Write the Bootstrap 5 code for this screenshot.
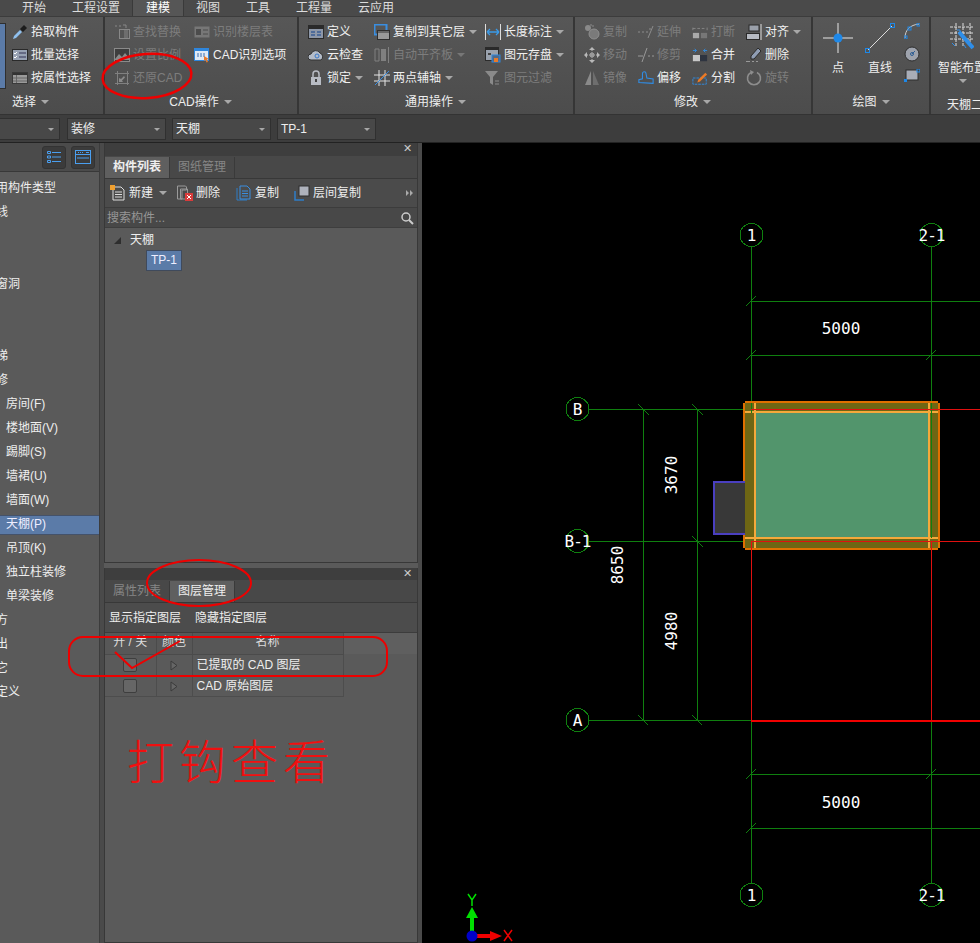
<!DOCTYPE html>
<html lang="zh-CN">
<head>
    <meta charset="UTF-8" />
    <meta name="viewport" content="width=device-width, initial-scale=1.0" />
    <title>建模</title>
    <link href="https://cdn.jsdelivr.net/npm/bootstrap@5.3.3/dist/css/bootstrap.min.css" rel="stylesheet" />
    <style>
        body {
            font-family: "Liberation Sans", "Noto Sans CJK SC", sans-serif;
            font-size: 12px;
            line-height: 16px;
            background-color: #3c3c3c;
            color: #eee;
            width: 980px;
            height: 943px;
            overflow: hidden;
        }

        .app-shell { position: relative; width: 980px; height: 943px; overflow: hidden; }

        /* tabs above the ribbon */
        .top-tabs { height: 16px; background-color: #4a4a4a; padding-left: 9px; }
        .top-tabs .nav-link {
            padding: 0 13px;
            height: 16px;
            line-height: 16px;
            color: #ddd;
            font-size: 12px;
        }
        .top-tabs .nav-link.active { background-color: #565656; color: #fff; box-shadow: 1px 0 #3a3a3a, -1px 0 #3a3a3a; }

        /* ribbon */
        .ribbon {
            height: 99px;
            overflow: hidden;
            background: linear-gradient(#575757, #4c4c4c);
            border-top: 1px solid #3c3c3c;
            border-bottom: 1px solid #333;
        }
        .rb-group { flex: none; padding-top: 3px; height: 97px; border-right: 2px solid #363636; position: relative; }
        .rb-body { height: 72px; }
        .rb-label { height: 20px; line-height: 20px; text-align: center; color: #eee; padding-right: 10px; }
        .rb-col { flex: none; }
        .rb-item { height: 23px; white-space: nowrap; gap: 3px; color: #f0f0f0; }
        .rb-item.off { color: #7d7d7d; }
        .rb-item svg { flex: none; }
        .caret-down {
            display: inline-block;
            width: 0;
            height: 0;
            border-left: 4px solid transparent;
            border-right: 4px solid transparent;
            border-top: 4px solid #a8a8a8;
            margin-left: 5px;
            vertical-align: 2px;
        }
        .rb-item .caret-down { margin-left: 1px; }
        .rb-item.off .caret-down { border-top-color: #777; }
        .rb-large { width: 30px; flex: none; text-align: center; white-space: nowrap; }
        .rb-large svg { display: block; margin: 3px 0 7px; }
        .sel-block { width: 6px; height: 66px; margin-top: 3px; background-color: #5b7ba8; border: 1px solid #2f2f2f; border-left: 0; }
        .g-select { width: 105px; }
        .g-cad { width: 194px; padding-left: 9px; }
        .g-common { width: 276px; padding-left: 9px; }
        .g-edit { width: 238px; padding-left: 9px; }
        .g-draw { width: 118px; padding-left: 10px; }
        .g-smart { flex: none; width: 60px; border-right: 0; padding-left: 7px; overflow: hidden; }
        .first-col { margin-left: 6px; }
        .c-80 { width: 80px; }
        .c-66 { width: 66px; }
        .c-111 { width: 111px; }
        .c-54 { width: 54px; }
        .lbl-select { padding-right: 42px; }
        .me-large { margin-right: 12px; }
        .me-small { margin-right: 9px; }
        .mini-col { padding-top: 3px; }
        .draw-mini { margin-bottom: 7px; }
        .draw-mini.low { margin-top: 3px; }
        .smart-big svg { margin: 3px 0 7px 10px; }
        .smart-name { white-space: nowrap; }
        .smart-caret { display: block; margin: 3px 0 0 21px; }
        .smart-label { text-align: left; padding-left: 9px; white-space: nowrap; }

        /* combo row */
        .combo-bar { height: 28px; background-color: #3d3d3d; padding-top: 3px; gap: 6px; border-bottom: 1px solid #222; }
        .combo-box {
            height: 22px;
            background-color: #484848;
            border: 1px solid #303030;
            padding: 0 4px 0 3px;
            color: #eee;
            flex: none;
        }
        .combo-box .caret-down { border-left-width: 3px; border-right-width: 3px; border-top-width: 3px; margin-right: 1px; }
        .w-first { width: 61px; margin-left: -1px; margin-right: 1px; }
        .w-combo { width: 99px; }

        /* main area */
        .work-area { height: 800px; }
        .side-list { width: 100px; flex: none; background-color: #5a5a5a; border-right: 1px solid #3c3c3c; overflow: hidden; }
        .side-head { height: 29px; background-color: #4b4b4b; border-bottom: 1px solid #383838; gap: 5px; padding-right: 4px; }
        .head-btn {
            width: 24px;
            height: 23px;
            background-color: #3b3b3b;
            border: 1px solid #333;
            border-radius: 3px;
        }
        .tree-list {
            --bs-list-group-bg: transparent;
            --bs-list-group-color: #eee;
            --bs-list-group-border-width: 0;
            --bs-list-group-border-radius: 0;
            --bs-list-group-item-padding-x: 0;
            --bs-list-group-item-padding-y: 0;
            --bs-list-group-active-bg: #5b7ba8;
            --bs-list-group-active-color: #eef;
            margin-top: 5px;
            white-space: nowrap;
        }
        .tree-list .list-group-item { height: 24px; line-height: 23px; padding-left: 6px; font-size: 12px; }
        .tree-list .list-group-item.top-row { margin-left: -16px; padding-left: 0; background: none; }
        .tree-list .list-group-item.active { height: 20px; line-height: 17px; margin: 2px 0; border-top: 1px solid #44526a; border-bottom: 1px solid #44526a; }

        .split-bar { width: 4px; flex: none; background-color: #4a4a4a; }
        .mid-col { width: 314px; flex: none; }
        .dock-panel { border: 1px solid #383838; border-top: 0; background-color: #5a5a5a; }
        .dock-title { height: 12px; background-color: #3e3e3e; position: relative; }
        .top-panel .dock-title { height: 13px; }
        .dock-x { position: absolute; right: 5px; top: -2px; font-size: 11px; color: #ccc; line-height: 14px; }
        .dock-tabs { height: 23px; background-color: #484848; border-bottom: 1px solid #383838; padding-top: 1px; }
        .dock-tab { width: 65px; text-align: center; line-height: 21px; color: #868686; border-right: 1px solid #3a3a3a; }
        .dock-tab.on { background-color: #5f5f5f; color: #eee; font-weight: 700; }
        .dock-tab.on.plain { font-weight: 400; }
        .tool-row { height: 29px; background-color: #4b4b4b; border-bottom: 1px solid #3c3c3c; padding-left: 5px; padding-right: 4px; }
        .tool-item { gap: 3px; white-space: nowrap; }
        .tool-item .caret-down { margin-left: 3px; }
        .t-new { width: 67px; }
        .t-del { width: 59px; }
        .t-dup { width: 58px; }
        .search-row { height: 20px; background-color: #484848; border-bottom: 1px solid #3e3e3e; padding: 0 3px 0 2px; color: #969696; }
        .tree-node { padding: 2px 0 0 9px; height: 22px; gap: 9px; }
        .tree-chip { margin-left: 41px; width: 36px; height: 21px; line-height: 19px; text-align: center; background-color: #5b7ba8; border: 1px solid #3f4a5c; color: #eef; }
        .top-panel { height: 420px; }
        .panel-gap { height: 5px; background-color: #5a5a5a; }
        .bottom-panel { height: 375px; }
        .layer-tools { height: 30px; gap: 14px; background-color: #4c4c4c; border-bottom: 1px solid #3c3c3c; padding-left: 4px; }
        .layer-table { width: 100%; table-layout: fixed; border-collapse: collapse; color: #eee; }
        .layer-table th { height: 21px; font-weight: 400; text-align: center; background-color: #575757; border-right: 1px solid #4b4b4b; border-bottom: 1px solid #4b4b4b; color: #ddd; padding: 0 0 3px; }
        .layer-table td { height: 21px; border-right: 1px solid #4d4d4d; border-bottom: 1px solid #4d4d4d; padding: 0; }
        .layer-table .free-cell { border: 0; }
        .layer-table th.free-cell { background-color: #5f5f5f; }
        .col-a { width: 51px; }
        .col-b { width: 36px; }
        .col-c { width: 151px; }
        .layer-box { display: block; width: 14px; height: 14px; margin: 0 auto; background-color: #666; border: 1px solid #3e3e3e; border-radius: 2px; }
        .name-cell { padding-left: 4px !important; }

        .draw-area { flex: 1 1 auto; background-color: #000; }
        .draw-area svg { display: block; }
        .draw-area text { font-family: "DejaVu Sans Mono", monospace; fill: #fff; font-size: 16px; text-anchor: middle; }
        .draw-area text.tight { letter-spacing: -1px; }

        /* red notes drawn over the screenshot */
        .mark-layer { position: absolute; left: 0; top: 0; pointer-events: none; }
        .mark-text { position: absolute; left: 127px; top: 729px; font-family: "Noto Sans CJK SC", sans-serif; font-size: 47px; line-height: 60px; letter-spacing: 5px; color: #f01010; font-weight: 300; white-space: nowrap; }
    </style>
</head>
<body>

<svg width="0" height="0" class="position-absolute">
    <symbol id="i-pick" viewBox="0 0 16 16"><path d="M1 15l1-3 6-6 2 2-6 6z" fill="#8fc0ee"/><path d="M8 5l4-4 3 3-4 4z" fill="#1c1c1c"/></symbol>
    <symbol id="i-batch" viewBox="0 0 16 16"><rect x="0.5" y="2.5" width="15" height="11" fill="#98a2b4" stroke="#2a2a2a"/><path d="M2 6l1 1 2-2M2 10l1 1 2-2" stroke="#fff" fill="none"/><path d="M7 6h7M7 10h7" stroke="#335"/></symbol>
    <symbol id="i-attr" viewBox="0 0 16 16"><rect x="0.5" y="2.5" width="15" height="11" fill="#9a9a9a" stroke="#3a3a3a"/><path d="M1 3h14v2H1z" fill="#333"/><path d="M4.500 5v8M1 8h14M1 11h14" stroke="#666"/></symbol>
    <symbol id="i-find" viewBox="0 0 16 16"><path d="M1 2h2M5 2h2M9 1h3v3" stroke="#888" fill="none"/><rect x="5.500" y="5.500" width="10" height="9" fill="none" stroke="#888"/><path d="M10 7h4M10 9h4M10 11h4M10 13h4" stroke="#888"/></symbol>
    <symbol id="i-scale" viewBox="0 0 16 16"><rect x="0.5" y="1.5" width="15" height="13" fill="#3e3e3e" stroke="#8a8a8a"/><path d="M1 12l4-5 3 3 3-4 4 5v2H1z" fill="#8a8a8a"/></symbol>
    <symbol id="i-restore" viewBox="0 0 16 16"><path d="M1 3.500h14M1 13.500h14M3.500 1v14M13.500 1v14" stroke="#808080" fill="none"/><path d="M10 6L7 9l-2-1v4h4l-1-1.500 3-3" fill="#8a8a8a"/></symbol>
    <symbol id="i-floor" viewBox="0 0 16 16"><rect x="0.500" y="2.500" width="15" height="11" fill="#777"/><rect x="2" y="5" width="5" height="6" fill="#4c4c4c"/><path d="M9 6h5M9 10h5" stroke="#4c4c4c"/></symbol>
    <symbol id="i-cadopt" viewBox="0 0 16 16"><rect x="0.500" y="1.500" width="14" height="12" fill="#dfe9f5" stroke="#2f86dc"/><path d="M1 1h14v3H1z" fill="#2f86dc"/><path d="M3 7h2M6 7h2M9 7h2M3 9h2M6 9h2M9 9h2" stroke="#3a6fb0"/><path d="M10 9l5 3-2 .5 1 2.500-1.500.5-1-2.500-1.500 1z" fill="#e87a2a"/></symbol>
    <symbol id="i-define" viewBox="0 0 16 16"><rect x="0.500" y="1.500" width="15" height="13" fill="#8d97a8" stroke="#2c2c2c"/><path d="M0 1h16v4H0z" fill="#2a2a2a"/><path d="M3 8h4M3 11h4M9 8h4M9 11h4" stroke="#3a5e94" stroke-width="1.500"/></symbol>
    <symbol id="i-cloud" viewBox="0 0 16 16"><path d="M3 13a3 3 0 0 1 0-6 5 5 0 0 1 9-1 4 4 0 0 1 1 7z" fill="#b4bcc8" stroke="#333"/><circle cx="9" cy="9" r="2" fill="none" stroke="#3a78c8"/></symbol>
    <symbol id="i-lock" viewBox="0 0 16 16"><rect x="3" y="7" width="10" height="8" fill="#b8bcc4"/><path d="M5 7V4a3 3 0 0 1 6 0v3" stroke="#b8bcc4" stroke-width="1.500" fill="none"/><rect x="7" y="9" width="2" height="3" fill="#444"/></symbol>
    <symbol id="i-copylayer" viewBox="0 0 16 16"><rect x="0.500" y="0.500" width="12" height="10" fill="none" stroke="#3a8ee0" stroke-width="2"/><rect x="3.500" y="6.500" width="12" height="9" fill="#999" stroke="#2e2e2e"/><path d="M4 7h11v2H4z" fill="#666"/></symbol>
    <symbol id="i-autoflat" viewBox="0 0 16 16"><path d="M1 2h4v12H1z" fill="none" stroke="#808080"/><path d="M7 2h5v12H7z" fill="#808080"/><path d="M14.500 0v16" stroke="#808080"/></symbol>
    <symbol id="i-twopoint" viewBox="0 0 16 16"><path d="M0 5h16M0 11h16M5 0v16M11 0v16" stroke="#e4e4e4" fill="none"/><path d="M1 15L15 1" stroke="#3a8ee0"/></symbol>
    <symbol id="i-dim" viewBox="0 0 16 16"><path d="M.500 0v16M15.500 0v16" stroke="#ddd"/><path d="M2 8h12M2 8l3-3M2 8l3 3M14 8l-3-3M14 8l-3 3" stroke="#3a9ae8" stroke-width="1.300" fill="none"/></symbol>
    <symbol id="i-save" viewBox="0 0 16 16"><rect x="0.500" y="0.500" width="13" height="13" fill="#9aa2ae" stroke="#2c2c2c"/><path d="M0 0h14v3H0z" fill="#2a2a2a"/><path d="M3 6h3v2H3z" fill="#444"/><rect x="7" y="8" width="8" height="7" fill="#506a8a" stroke="#2f86dc"/><path d="M9 11h4v4H9z" fill="#e87a2a"/></symbol>
    <symbol id="i-filter" viewBox="0 0 16 16"><path d="M0 1h13L8 7v8L5 13V7z" fill="#8a8a8a"/><path d="M10 11h4M10 14h4" stroke="#8a8a8a"/></symbol>
    <symbol id="i-copy" viewBox="0 0 16 16"><circle cx="4" cy="4" r="3" fill="#8a8a8a"/><circle cx="10" cy="10" r="5" fill="#7a7a7a" stroke="#8f8f8f"/><path d="M6 1h3v3" stroke="#8a8a8a" fill="none" stroke-dasharray="2 1"/></symbol>
    <symbol id="i-move" viewBox="0 0 16 16"><path d="M8 0l3 3H5zM8 16l3-3H5zM0 8l3-3v6zM16 8l-3-3v6z" fill="#b8b8b8"/><rect x="6" y="6" width="4" height="4" fill="#999"/><path d="M8 3v3M8 10v3M3 8h3M10 8h3" stroke="#b8b8b8" stroke-dasharray="1 1"/></symbol>
    <symbol id="i-mirror" viewBox="0 0 16 16"><path d="M7 1v14H1z" fill="#8a8a8a"/><path d="M9 1v14h6z" fill="#6e6e6e"/></symbol>
    <symbol id="i-extend" viewBox="0 0 16 16"><path d="M0 8h2M4 8h2M8 8h2" stroke="#8c8c8c"/><path d="M11 14l5-12" stroke="#8c8c8c" transform="translate(-1 0)"/><path d="M11 5h2" stroke="#8c8c8c"/></symbol>
    <symbol id="i-trim" viewBox="0 0 16 16"><path d="M0 9h5M10 9h2M14 9h2" stroke="#999"/><path d="M4 15l5-14" stroke="#999"/></symbol>
    <symbol id="i-offset" viewBox="0 0 18 16"><path d="M1 13V10l4-1V3a2 2 0 0 1 4 0l1 5 7 1v5z" fill="none" stroke="#2f8ee8" stroke-width="1.200"/></symbol>
    <symbol id="i-break" viewBox="0 0 18 16"><path d="M1 4V1M1 2h3M6 2h3M11 2h3M17 1v3" stroke="#8a8a8a" transform="translate(0 2)"/><path d="M1 9h7v6H1z" fill="#aaa"/><path d="M10 9h7v6h-7z" fill="#777"/></symbol>
    <symbol id="i-merge" viewBox="0 0 18 16"><path d="M1 3h4M5 3L3 1M5 3L3 5M13 3h4M13 3l2-2M13 3l2 2" stroke="#2f8ee8" fill="none"/><rect x="1" y="8" width="8" height="7" fill="#c8c8c8"/><rect x="9" y="8" width="8" height="7" fill="#2e3440"/></symbol>
    <symbol id="i-split" viewBox="0 0 18 16"><path d="M1 8h15v7H1z" fill="none" stroke="#2f8ee8" stroke-dasharray="3 1"/><path d="M7 10l8-8 2 2-8 8-3 1z" fill="#ec7a26"/></symbol>
    <symbol id="i-align" viewBox="0 0 16 16"><rect x="3" y="1" width="10" height="6" fill="#9aa0aa" stroke="#2a2a2a"/><rect x="0.500" y="9.500" width="13" height="6" fill="#b6bac2" stroke="#2a2a2a"/><path d="M15 0v16" stroke="#ddd"/></symbol>
    <symbol id="i-del" viewBox="0 0 16 16"><path d="M5 9l7-8 3 3-7 8H5z" fill="#8f9db4" stroke="#2a2a2a"/><path d="M0 14.500h4M6 14.500h2M10 14.500h2" stroke="#999"/></symbol>
    <symbol id="i-rotate" viewBox="0 0 16 16"><path d="M11 2.500a6.500 6.500 0 1 1-6 0" fill="none" stroke="#8d8d8d" stroke-width="1.600"/><path d="M4 0l4 2-3 3z" fill="#8d8d8d"/></symbol>
    <symbol id="i-new" viewBox="0 0 16 16"><path d="M3 2h8l3 3v10H3z" fill="#4b4b4b" stroke="#dcdcdc"/><path d="M5 7h7M5 9.500h7M5 12h7" stroke="#dcdcdc"/><rect x="0" y="0" width="5" height="5" fill="#f0a030"/></symbol>
    <symbol id="i-remove" viewBox="0 0 16 16"><path d="M.500 1h8l1 1v3H5v9H.500z" fill="none" stroke="#9a9a9a"/><path d="M3.500 4h7v10h-7z" fill="none" stroke="#9a9a9a"/><rect x="8" y="8" width="8" height="8" fill="#d83b3b"/><path d="M10 10l4 4M14 10l-4 4" stroke="#fff"/></symbol>
    <symbol id="i-dup" viewBox="0 0 16 16"><path d="M1 3v12h10" fill="none" stroke="#2f7ec8"/><path d="M4 1h7l3 3v10H4z" fill="#4b4b4b" stroke="#3a8ee0"/><path d="M6 6h6M6 8.500h6M6 11h6" stroke="#3a8ee0"/></symbol>
    <symbol id="i-layer" viewBox="0 0 16 16"><path d="M1 6v9h9" fill="none" stroke="#2f7ec8" stroke-width="1.500"/><rect x="5" y="1" width="10" height="10" fill="#aeb2bc" stroke="#2e2e2e"/></symbol>
    <symbol id="i-search" viewBox="0 0 14 14"><circle cx="6" cy="6" r="4" fill="none" stroke="#ccc" stroke-width="1.500"/><path d="M9 9l4 4" stroke="#ccc" stroke-width="2"/></symbol>
    <symbol id="i-play" viewBox="0 0 8 11"><path d="M1 1l6 4.500L1 10z" fill="#666" stroke="#3a3a3a"/></symbol>
</svg>

<div class="app-shell">
    <ul class="nav top-tabs">
        <li class="nav-item"><a class="nav-link" href="#">开始</a></li>
        <li class="nav-item"><a class="nav-link" href="#">工程设置</a></li>
        <li class="nav-item"><a class="nav-link active" href="#">建模</a></li>
        <li class="nav-item"><a class="nav-link" href="#">视图</a></li>
        <li class="nav-item"><a class="nav-link" href="#">工具</a></li>
        <li class="nav-item"><a class="nav-link" href="#">工程量</a></li>
        <li class="nav-item"><a class="nav-link" href="#">云应用</a></li>
    </ul>

    <div class="ribbon d-flex">
        <div class="rb-group g-select">
            <div class="rb-body d-flex">
                <div class="sel-block"></div>
                <div class="rb-col first-col">
                    <div class="rb-item d-flex align-items-center"><svg width="16" height="16"><use href="#i-pick"/></svg>拾取构件</div>
                    <div class="rb-item d-flex align-items-center"><svg width="16" height="16"><use href="#i-batch"/></svg>批量选择</div>
                    <div class="rb-item d-flex align-items-center"><svg width="16" height="16"><use href="#i-attr"/></svg>按属性选择</div>
                </div>
            </div>
            <div class="rb-label lbl-select">选择<span class="caret-down"></span></div>
        </div>

        <div class="rb-group g-cad">
            <div class="rb-body d-flex">
                <div class="rb-col c-80">
                    <div class="rb-item off d-flex align-items-center"><svg width="16" height="16"><use href="#i-find"/></svg>查找替换</div>
                    <div class="rb-item off d-flex align-items-center"><svg width="16" height="16"><use href="#i-scale"/></svg>设置比例</div>
                    <div class="rb-item off d-flex align-items-center"><svg width="16" height="16"><use href="#i-restore"/></svg>还原CAD</div>
                </div>
                <div class="rb-col">
                    <div class="rb-item off d-flex align-items-center"><svg width="16" height="16"><use href="#i-floor"/></svg>识别楼层表</div>
                    <div class="rb-item d-flex align-items-center"><svg width="16" height="16"><use href="#i-cadopt"/></svg>CAD识别选项</div>
                </div>
            </div>
            <div class="rb-label">CAD操作<span class="caret-down"></span></div>
        </div>

        <div class="rb-group g-common">
            <div class="rb-body d-flex">
                <div class="rb-col c-66">
                    <div class="rb-item d-flex align-items-center"><svg width="16" height="16"><use href="#i-define"/></svg>定义</div>
                    <div class="rb-item d-flex align-items-center"><svg width="16" height="16"><use href="#i-cloud"/></svg>云检查</div>
                    <div class="rb-item d-flex align-items-center"><svg width="16" height="16"><use href="#i-lock"/></svg>锁定<span class="caret-down"></span></div>
                </div>
                <div class="rb-col c-111">
                    <div class="rb-item d-flex align-items-center"><svg width="16" height="16"><use href="#i-copylayer"/></svg>复制到其它层<span class="caret-down"></span></div>
                    <div class="rb-item off d-flex align-items-center"><svg width="16" height="16"><use href="#i-autoflat"/></svg>自动平齐板<span class="caret-down"></span></div>
                    <div class="rb-item d-flex align-items-center"><svg width="16" height="16"><use href="#i-twopoint"/></svg>两点辅轴<span class="caret-down"></span></div>
                </div>
                <div class="rb-col">
                    <div class="rb-item d-flex align-items-center"><svg width="16" height="16"><use href="#i-dim"/></svg>长度标注<span class="caret-down"></span></div>
                    <div class="rb-item d-flex align-items-center"><svg width="16" height="16"><use href="#i-save"/></svg>图元存盘<span class="caret-down"></span></div>
                    <div class="rb-item off d-flex align-items-center"><svg width="16" height="16"><use href="#i-filter"/></svg>图元过滤</div>
                </div>
            </div>
            <div class="rb-label">通用操作<span class="caret-down"></span></div>
        </div>

        <div class="rb-group g-edit">
            <div class="rb-body d-flex">
                <div class="rb-col c-54">
                    <div class="rb-item off d-flex align-items-center"><svg width="16" height="16"><use href="#i-copy"/></svg>复制</div>
                    <div class="rb-item off d-flex align-items-center"><svg width="16" height="16"><use href="#i-move"/></svg>移动</div>
                    <div class="rb-item off d-flex align-items-center"><svg width="16" height="16"><use href="#i-mirror"/></svg>镜像</div>
                </div>
                <div class="rb-col c-54">
                    <div class="rb-item off d-flex align-items-center"><svg width="16" height="16"><use href="#i-extend"/></svg>延伸</div>
                    <div class="rb-item off d-flex align-items-center"><svg width="16" height="16"><use href="#i-trim"/></svg>修剪</div>
                    <div class="rb-item d-flex align-items-center"><svg width="16" height="16"><use href="#i-offset"/></svg>偏移</div>
                </div>
                <div class="rb-col c-54">
                    <div class="rb-item off d-flex align-items-center"><svg width="16" height="16"><use href="#i-break"/></svg>打断</div>
                    <div class="rb-item d-flex align-items-center"><svg width="16" height="16"><use href="#i-merge"/></svg>合并</div>
                    <div class="rb-item d-flex align-items-center"><svg width="16" height="16"><use href="#i-split"/></svg>分割</div>
                </div>
                <div class="rb-col">
                    <div class="rb-item d-flex align-items-center"><svg width="16" height="16"><use href="#i-align"/></svg>对齐<span class="caret-down"></span></div>
                    <div class="rb-item d-flex align-items-center"><svg width="16" height="16"><use href="#i-del"/></svg>删除</div>
                    <div class="rb-item off d-flex align-items-center"><svg width="16" height="16"><use href="#i-rotate"/></svg>旋转</div>
                </div>
            </div>
            <div class="rb-label">修改<span class="caret-down"></span></div>
        </div>

        <div class="rb-group g-draw">
            <div class="rb-body d-flex">
                <div class="rb-large me-large">
                    <svg width="30" height="30" viewBox="0 0 30 30"><path d="M0 15h30M15 0v30" stroke="#e6e6e6"/><circle cx="15" cy="15" r="4.500" fill="#1e88e8"/></svg>
                    点
                </div>
                <div class="rb-large me-small">
                    <svg width="30" height="30" viewBox="0 0 30 30"><path d="M3 27L27 3" stroke="#ddd"/><rect x="0.500" y="25.500" width="4" height="4" fill="none" stroke="#1e88e8"/><rect x="25.500" y="0.500" width="4" height="4" fill="none" stroke="#1e88e8"/></svg>
                    直线
                </div>
                <div class="rb-col mini-col">
                    <svg class="d-block draw-mini" width="16" height="16" viewBox="0 0 16 16"><path d="M1 15C1 7 6 2 15 1" fill="none" stroke="#ccc"/><rect x="13" y="0" width="3" height="3" fill="none" stroke="#1e88e8"/><rect x="0" y="13" width="3" height="3" fill="none" stroke="#1e88e8"/><rect x="4" y="4" width="3" height="3" fill="none" stroke="#1e88e8"/></svg>
                    <svg class="d-block draw-mini" width="16" height="16" viewBox="0 0 16 16"><circle cx="8" cy="8" r="7" fill="#9ea3ad" stroke="#2e2e2e"/><circle cx="8" cy="8" r="1.500" fill="none" stroke="#2f5e94"/><path d="M8 8l3-3" stroke="#2f5e94"/></svg>
                    <svg class="d-block draw-mini low" width="16" height="13" viewBox="0 0 16 13"><rect x="2" y="1" width="12" height="10" fill="#a8adb8" stroke="#2e2e2e"/><rect x="13" y="0" width="3" height="3" fill="none" stroke="#1e88e8"/><rect x="0" y="10" width="3" height="3" fill="#1e88e8"/></svg>
                </div>
            </div>
            <div class="rb-label">绘图<span class="caret-down"></span></div>
        </div>

        <div class="rb-group g-smart">
            <div class="rb-body">
                <div class="smart-big">
                    <svg class="d-block" width="26" height="30" viewBox="0 0 26 30"><path d="M2 4h24M2 10h24M2 16h24M8 0v24M15 0v24M22 0v24" stroke="#ddd" stroke-dasharray="3 1"/><path d="M11 9l14 16" stroke="#2f8ee8" stroke-width="4"/><path d="M9 7l3 0 0 3M4 20l3 3M16 22l2 3" stroke="#2f8ee8" fill="none"/></svg>
                    <div class="smart-name">智能布置</div>
                    <span class="caret-down smart-caret"></span>
                </div>
            </div>
            <div class="rb-label smart-label">天棚二次编辑</div>
        </div>
    </div>

    <div class="combo-bar d-flex">
        <div class="combo-box w-first d-flex align-items-center justify-content-end"><span class="caret-down"></span></div>
        <div class="combo-box w-combo d-flex align-items-center justify-content-between">装修<span class="caret-down"></span></div>
        <div class="combo-box w-combo d-flex align-items-center justify-content-between">天棚<span class="caret-down"></span></div>
        <div class="combo-box w-combo d-flex align-items-center justify-content-between">TP-1<span class="caret-down"></span></div>
    </div>

    <div class="work-area d-flex">
        <div class="side-list">
            <div class="side-head d-flex align-items-center justify-content-end">
                <div class="head-btn d-flex align-items-center justify-content-center">
                    <svg width="14" height="14" viewBox="0 0 14 14"><path d="M.500 1.500h3v2h-3zM.500 6h3v2h-3zM.500 10.500h3v2h-3z" fill="none" stroke="#4a9ff0"/><path d="M5 2.500h9M5 7h9M5 11.500h9" stroke="#4a9ff0"/></svg>
                </div>
                <div class="head-btn d-flex align-items-center justify-content-center">
                    <svg width="16" height="14" viewBox="0 0 16 14"><rect x="0.500" y="0.500" width="15" height="13" fill="none" stroke="#4a9ff0"/><path d="M0 4.500h16M3 2.500h1M5 2.500h1M7 2.500h1M11 2.500h3M2 8h12" stroke="#4a9ff0"/></svg>
                </div>
            </div>
            <ul class="list-group tree-list">
                <li class="list-group-item top-row">常用构件类型</li>
                <li class="list-group-item top-row">轴线</li>
                <li class="list-group-item top-row">柱</li>
                <li class="list-group-item top-row">墙</li>
                <li class="list-group-item top-row">门窗洞</li>
                <li class="list-group-item top-row">梁</li>
                <li class="list-group-item top-row">板</li>
                <li class="list-group-item top-row">楼梯</li>
                <li class="list-group-item top-row">装修</li>
                <li class="list-group-item">房间(F)</li>
                <li class="list-group-item">楼地面(V)</li>
                <li class="list-group-item">踢脚(S)</li>
                <li class="list-group-item">墙裙(U)</li>
                <li class="list-group-item">墙面(W)</li>
                <li class="list-group-item active">天棚(P)</li>
                <li class="list-group-item">吊顶(K)</li>
                <li class="list-group-item">独立柱装修</li>
                <li class="list-group-item">单梁装修</li>
                <li class="list-group-item top-row">土方</li>
                <li class="list-group-item top-row">基出</li>
                <li class="list-group-item top-row">其它</li>
                <li class="list-group-item top-row">自定义</li>
            </ul>
        </div>

        <div class="split-bar"></div>

        <div class="mid-col">
            <div class="dock-panel top-panel">
                <div class="dock-title"><span class="dock-x">✕</span></div>
                <div class="dock-tabs d-flex">
                    <div class="dock-tab on">构件列表</div>
                    <div class="dock-tab">图纸管理</div>
                </div>
                <div class="tool-row d-flex align-items-center">
                    <div class="tool-item d-flex align-items-center t-new"><svg width="16" height="16"><use href="#i-new"/></svg>新建<span class="caret-down"></span></div>
                    <div class="tool-item d-flex align-items-center t-del"><svg width="16" height="16"><use href="#i-remove"/></svg>删除</div>
                    <div class="tool-item d-flex align-items-center t-dup"><svg width="16" height="16"><use href="#i-dup"/></svg>复制</div>
                    <div class="tool-item d-flex align-items-center"><svg width="16" height="16"><use href="#i-layer"/></svg>层间复制</div>
                    <svg class="ms-auto" width="7" height="6" viewBox="0 0 7 6"><path d="M0 0l3 3-3 3zM4 0l3 3-3 3z" fill="#aaa"/></svg>
                </div>
                <div class="search-row d-flex align-items-center justify-content-between">搜索构件...<svg width="14" height="14"><use href="#i-search"/></svg></div>
                <div class="tree-node d-flex align-items-center">
                    <svg width="7" height="7" viewBox="0 0 7 7"><path d="M7 0v7H0z" fill="#2e2e2e"/></svg>
                    <span>天棚</span>
                </div>
                <div class="tree-chip">TP-1</div>
            </div>
            <div class="panel-gap"></div>
            <div class="dock-panel bottom-panel">
                <div class="dock-title"><span class="dock-x">✕</span></div>
                <div class="dock-tabs d-flex">
                    <div class="dock-tab">属性列表</div>
                    <div class="dock-tab on plain">图层管理</div>
                </div>
                <div class="layer-tools d-flex align-items-center">
                    <span>显示指定图层</span>
                    <span>隐藏指定图层</span>
                </div>
                <table class="layer-table">
                    <colgroup><col class="col-a"><col class="col-b"><col class="col-c"><col></colgroup>
                    <thead>
                        <tr><th>开 / 关</th><th>颜色</th><th>名称</th><th class="free-cell"></th></tr>
                    </thead>
                    <tbody>
                        <tr><td><span class="layer-box"></span></td><td class="text-center"><svg width="8" height="11"><use href="#i-play"/></svg></td><td class="name-cell">已提取的 CAD 图层</td><td class="free-cell"></td></tr>
                        <tr><td><span class="layer-box"></span></td><td class="text-center"><svg width="8" height="11"><use href="#i-play"/></svg></td><td class="name-cell">CAD 原始图层</td><td class="free-cell"></td></tr>
                    </tbody>
                </table>
            </div>
        </div>

        <div class="split-bar"></div>

        <div class="draw-area">
            <svg width="558" height="800" viewBox="422 143 558 800">
                <g shape-rendering="crispEdges" stroke="#0f7f0f" fill="none">
                    <path d="M751.500 247V541M931.500 247V541M751.500 720V883M931.500 720V883"/>
                    <path d="M589 409.500H751M589 541.500H751M589 720.500H751"/>
                    <path d="M643.500 409V720M697.500 409V720"/>
                    <path d="M751 301.500H980M751 355.500H980M751 774.500H980M751 828.500H980"/>
                </g>
                <g stroke="#0f7f0f" fill="none" shape-rendering="crispEdges">
                    <path d="M638 404l11 11M692 404l11 11M692 536l11 11M638 715l10 10M692 715l10 10"/>
                    <path d="M746 306l10-10M746 360l10-10M926 360l10-10M746 779l10-10M926 779l10-10M746 833l10-10"/>
                </g>

                <path d="M745 403H938V548H745z" fill="#6e6614"/>
                <path d="M755 413H928V537H755z" fill="#52956c"/>
                <path d="M745 402H938M745 549H938M744 403V548M939 403V548" stroke="#e07000" stroke-width="2" shape-rendering="crispEdges" fill="none"/>
                <path d="M745 412H938M745 538H938" stroke="#f5a93a" stroke-width="2" shape-rendering="crispEdges"/>
                <path d="M754.500 403V548M928.500 403V548" stroke="#f5a93a" stroke-width="2" shape-rendering="crispEdges"/>
                <path d="M745 482H714V534H745" fill="#383838" stroke="#4a3fc0" stroke-width="2" shape-rendering="crispEdges"/>

                <g shape-rendering="crispEdges" fill="none">
                    <path d="M751.500 403V413M931.500 403V538" stroke="#0f7f0f"/>
                    <path d="M751 409.500H980M751 541.500H980" stroke="#e01010"/>
                    <path d="M751.500 541V720M931.500 541V720" stroke="#e01010"/>
                    <path d="M751 720.500H980" stroke="#f00000" stroke-width="2"/>
                </g>

                <g fill="none" stroke="#0f7f0f" shape-rendering="crispEdges">
                    <circle cx="751.500" cy="235" r="11.500"/>
                    <circle cx="931.500" cy="235" r="11.500"/>
                    <circle cx="751.500" cy="895" r="11.500"/>
                    <circle cx="931.500" cy="895" r="11.500"/>
                    <circle cx="577.500" cy="409" r="11.500"/>
                    <circle cx="577.500" cy="541" r="11.500"/>
                    <circle cx="577.500" cy="720" r="11.500"/>
                </g>

                <text x="751.500" y="241">1</text>
                <text class="tight" x="931.500" y="241">2-1</text>
                <text x="751.500" y="901">1</text>
                <text class="tight" x="931.500" y="901">2-1</text>
                <text x="577.500" y="415">B</text>
                <text class="tight" x="577.500" y="547">B-1</text>
                <text x="577.500" y="726">A</text>
                <text x="841" y="334">5000</text>
                <text x="841" y="808">5000</text>
                <text transform="translate(677 475) rotate(-90)">3670</text>
                <text transform="translate(677 631) rotate(-90)">4980</text>
                <text transform="translate(623 565) rotate(-90)">8650</text>

                <path d="M470 918h4v13h-4zM472 907l6 11h-12z" fill="#00e000"/>
                <path d="M476 934h14v4h-14zM502 936l-12 5v-10z" fill="#f00000"/>
                <circle cx="472" cy="936" r="5.500" fill="#0000c8"/>
                <path d="M468 894l4 6 4-6M472 900v6" stroke="#00e000" stroke-width="1.500" fill="none"/>
                <path d="M504 930l8 11M512 930l-8 11" stroke="#f00000" stroke-width="1.500" fill="none"/>
            </svg>
        </div>
    </div>

    <svg class="mark-layer" width="980" height="943" viewBox="0 0 980 943" fill="none" stroke="#ee0000">
        <ellipse cx="147" cy="76" rx="44.500" ry="22" stroke-width="2.500" transform="rotate(-4 147 76)"/>
        <ellipse cx="199" cy="583" rx="52" ry="23" stroke-width="2"/>
        <rect x="69" y="637" width="318" height="39" rx="14" stroke-width="2"/>
        <path d="M115 652l17 16 48-27" stroke-width="2"/>
    </svg>
    <div class="mark-text">打钩查看</div>
</div>

<script src="https://cdn.jsdelivr.net/npm/bootstrap@5.3.3/dist/js/bootstrap.bundle.min.js"></script>
</body>
</html>
